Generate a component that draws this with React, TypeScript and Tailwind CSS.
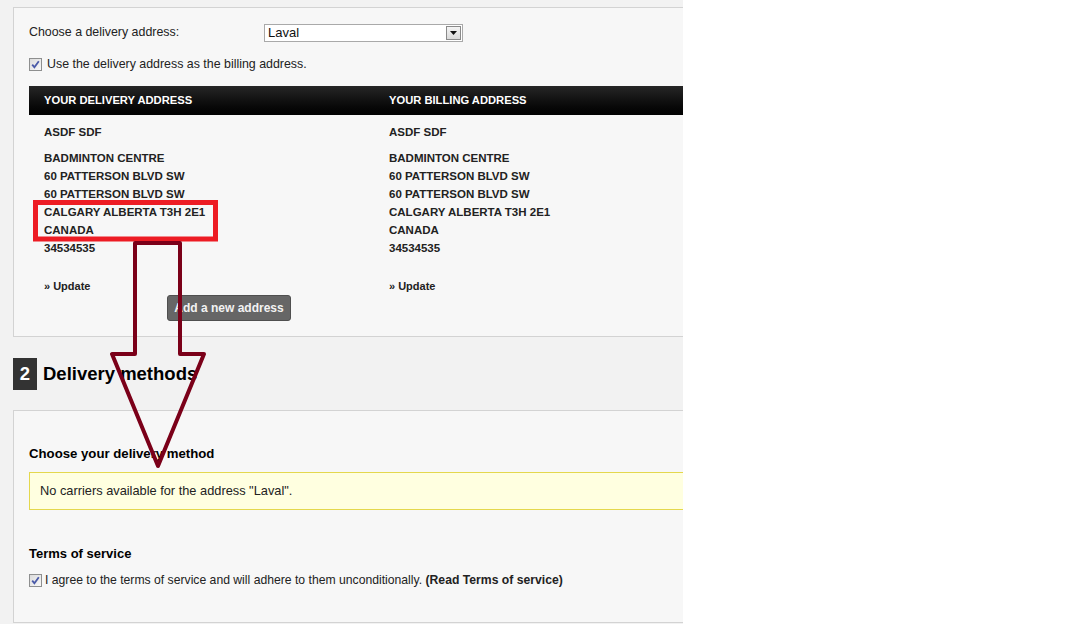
import React from "react";

function Check() {
  return (
    <span className="inline-flex h-[13px] w-[13px] shrink-0 items-center justify-center border border-[#8e8f8f] bg-linear-to-br from-[#dcdcdc] to-[#f8f8f8]">
      <svg width="9" height="9" viewBox="0 0 9 9">
        <path d="M1.2 4.6 L3.4 7.2 L7.8 1.2" fill="none" stroke="#4a5aa8" strokeWidth="1.8" />
      </svg>
    </span>
  );
}

const lines = [
  "BADMINTON CENTRE",
  "60 PATTERSON BLVD SW",
  "60 PATTERSON BLVD SW",
  "CALGARY ALBERTA T3H 2E1",
  "CANADA",
  "34534535",
];

function AddressCol() {
  return (
    <div className="w-[345px] pl-[15px] text-[11.5px] font-bold leading-[18px] text-[#222]">
      <div className="mt-[8px]">ASDF SDF</div>
      <div className="mt-[8px]">
        {lines.map((l, i) => (
          <div key={i}>{l}</div>
        ))}
      </div>
      <div className="mt-[20px] text-[11px]">» Update</div>
    </div>
  );
}

export default function App() {
  return (
    <div className="flex h-[624px] w-[1078px] overflow-hidden bg-white font-['Liberation_Sans',Arial,sans-serif] text-[#333]">
      <div className="relative h-[624px] w-[683px] shrink-0 overflow-hidden bg-[#f2f2f2] pl-[13px] pt-[7px]">
        {/* Panel 1 */}
        <div className="h-[330px] w-[720px] border border-[#d3d3d3] bg-[#f7f7f7] pl-[15px] pt-[16px]">
          <div className="flex h-[18px] items-start">
            <div className="w-[235px] text-[12.4px] leading-[16px] text-[#222]">Choose a delivery address:</div>
            <div className="flex h-[18px] w-[199px] items-center border border-[#a9a9a9] bg-white">
              <span className="flex-1 pl-[3px] text-[13px] leading-[16px] text-[#111]">Laval</span>
              <span className="mr-[1px] flex h-[14px] w-[15px] items-center justify-center border border-[#8a8a8a] bg-linear-to-b from-[#f4f4f4] to-[#dadada]">
                <svg width="7" height="4" viewBox="0 0 7 4">
                  <path d="M0 0 H7 L3.5 4 Z" fill="#111" />
                </svg>
              </span>
            </div>
          </div>
          <div className="mt-[16px] flex h-[13px] items-center gap-[5px]">
            <Check />
            <span className="text-[12.4px] leading-[13px] text-[#222]">Use the delivery address as the billing address.</span>
          </div>
          <div className="mt-[15px] flex h-[29px] items-center bg-linear-to-b from-[#262626] to-[#020202] text-[11.2px] font-bold text-white">
            <div className="w-[345px] pl-[15px]">YOUR DELIVERY ADDRESS</div>
            <div className="pl-[15px]">YOUR BILLING ADDRESS</div>
          </div>
          <div className="flex">
            <AddressCol />
            <AddressCol />
          </div>
          <div className="ml-[138px] mt-[0px] flex h-[26px] w-[124px] items-center justify-center rounded-[3px] border border-[#4f4f4f] bg-[#666] text-[12px] font-bold text-[#f2f2f2]">
            Add a new address
          </div>
        </div>

        {/* Step 2 heading */}
        <div className="mt-[21px] flex h-[32px] items-center">
          <div className="flex h-[32px] w-[24px] items-center justify-center bg-[#333] text-[18.5px] font-bold text-white">2</div>
          <div className="ml-[6px] text-[18.5px] font-bold text-black">Delivery methods</div>
        </div>

        {/* Panel 2 */}
        <div className="mt-[20px] h-[213px] w-[720px] border border-[#d3d3d3] bg-[#f7f7f7] pl-[15px] pt-[35px]">
          <div className="text-[13.2px] font-bold leading-[16px] text-black">Choose your delivery method</div>
          <div className="mt-[10px] flex h-[38px] items-center border border-[#e4d84d] bg-[#ffffe0] pl-[10px] text-[12.8px] text-[#222]">
            No carriers available for the address "Laval".
          </div>
          <div className="mt-[36px] text-[13px] font-bold leading-[16px] text-black">Terms of service</div>
          <div className="mt-[12px] flex h-[13px] items-center gap-[3px]">
            <Check />
            <span className="text-[12.2px] leading-[13px] text-[#222]">
              I agree to the terms of service and will adhere to them unconditionally. <b>(Read Terms of service)</b>
            </span>
          </div>
        </div>

        {/* Annotation overlay */}
        <svg className="pointer-events-none absolute left-0 top-0" width="683" height="624" viewBox="0 0 683 624">
          <rect x="35.5" y="202.5" width="180" height="36.5" fill="none" stroke="#ed1c24" strokeWidth="5" />
          <polygon
            points="135,243 180,243 180,354 204,354 158,466 112,354 135,354"
            fill="none"
            stroke="#7b0019"
            strokeWidth="4"
            strokeLinejoin="round"
          />
        </svg>
      </div>
      <div className="flex-1 bg-white" />
    </div>
  );
}
